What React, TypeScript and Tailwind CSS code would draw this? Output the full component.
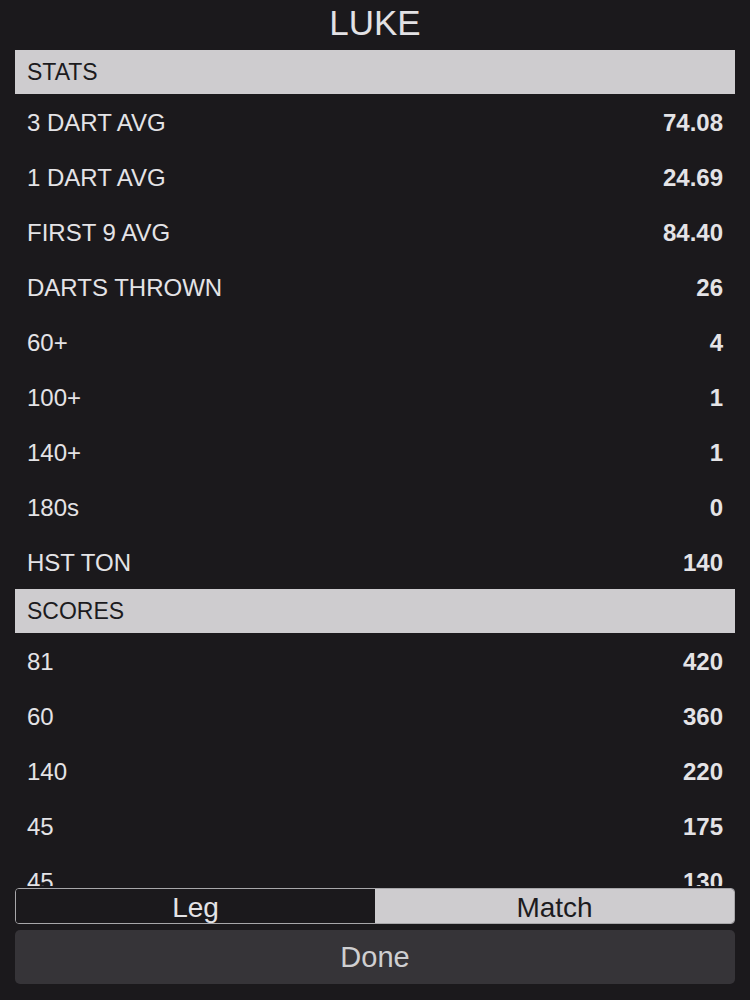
import React from "react";

type Row = { label: string; value: string };

const stats: Row[] = [
  { label: "3 DART AVG", value: "74.08" },
  { label: "1 DART AVG", value: "24.69" },
  { label: "FIRST 9 AVG", value: "84.40" },
  { label: "DARTS THROWN", value: "26" },
  { label: "60+", value: "4" },
  { label: "100+", value: "1" },
  { label: "140+", value: "1" },
  { label: "180s", value: "0" },
  { label: "HST TON", value: "140" },
];

const scores: Row[] = [
  { label: "81", value: "420" },
  { label: "60", value: "360" },
  { label: "140", value: "220" },
  { label: "45", value: "175" },
  { label: "45", value: "130" },
];

function SectionHeader({ title }: { title: string }) {
  return (
    <div className="mx-[15px] flex h-[44px] shrink-0 items-center bg-[#cecccf] px-[12px] pt-[1px] text-[23px] text-[#1c1b1e]">
      {title}
    </div>
  );
}

function StatRow({ row }: { row: Row }) {
  return (
    <div className="flex h-[55px] shrink-0 items-center justify-between px-[27px] pt-[3px] text-[24px] text-[#e4e3e6]">
      <span>{row.label}</span>
      <span className="font-bold">{row.value}</span>
    </div>
  );
}

export default function App() {
  const [mode, setMode] = React.useState<"leg" | "match">("match");

  return (
    <div
      className="flex h-[1000px] w-[750px] flex-col bg-[#1b191c]"
      style={{ fontFamily: '"Liberation Sans", Arial, sans-serif' }}
    >
      <h1 className="flex h-[50px] shrink-0 items-center justify-center pb-[4px] text-[35px] font-normal text-[#e2e1e4]">
        LUKE
      </h1>

      <div className="flex min-h-0 flex-1 flex-col overflow-hidden">
        <SectionHeader title="STATS" />
        {stats.map((row) => (
          <StatRow key={row.label} row={row} />
        ))}
        <SectionHeader title="SCORES" />
        {scores.map((row, i) => (
          <StatRow key={`${row.label}-${i}`} row={row} />
        ))}
      </div>

      <div className="mx-[15px] mt-[2px] flex h-[36px] shrink-0 overflow-hidden rounded-[4px] border border-[#a8a7aa] text-[28px] leading-none">
        <button
          type="button"
          onClick={() => setMode("leg")}
          className={
            mode === "leg"
              ? "flex-1 bg-[#cecccf] pt-[3px] text-[#1c1b1e]"
              : "flex-1 bg-[#1b191c] pt-[3px] text-[#e4e3e6]"
          }
        >
          Leg
        </button>
        <button
          type="button"
          onClick={() => setMode("match")}
          className={
            mode === "match"
              ? "flex-1 bg-[#cecccf] pt-[3px] text-[#1c1b1e]"
              : "flex-1 bg-[#1b191c] pt-[3px] text-[#e4e3e6]"
          }
        >
          Match
        </button>
      </div>

      <button
        type="button"
        className="mx-[15px] mt-[6px] mb-[16px] h-[54px] shrink-0 rounded-[5px] bg-[#363438] pt-[2px] text-[29px] text-[#cfcfd1]"
      >
        Done
      </button>
    </div>
  );
}
